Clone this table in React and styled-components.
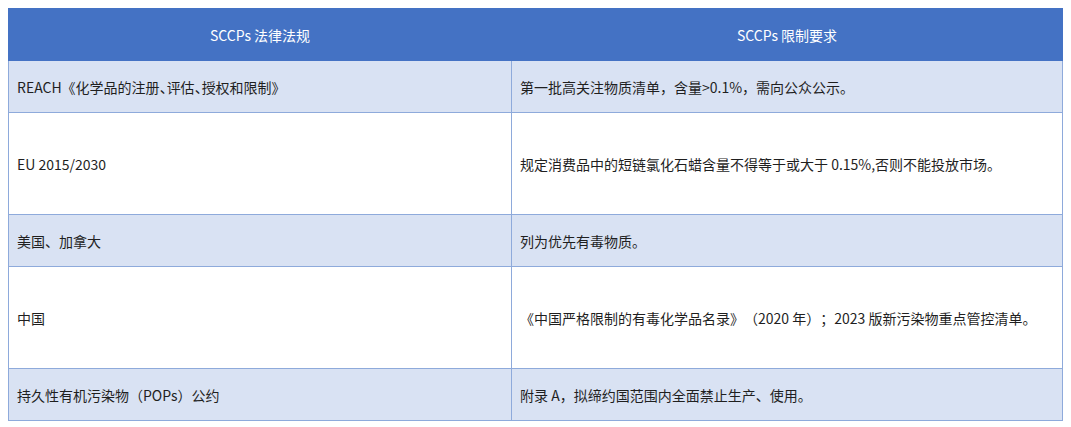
import React from "react";
import styled, { createGlobalStyle } from "styled-components";

const Global = createGlobalStyle`
  body {
    margin: 8px;
    background: #ffffff;
    font-family: "Noto Sans CJK SC", "Noto Sans", sans-serif;
    text-spacing-trim: space-all;
  }
`;

const Table = styled.table`
  width: 1054px;
  border-collapse: collapse;
  table-layout: fixed;
  font-size: 14px;
  color: #1f1f1f;
`;

const HeadCell = styled.th`
  height: 52px;
  padding: 0 8px;
  background: #4472c4;
  color: #ffffff;
  font-weight: normal;
  text-align: center;
  border: 1px solid #4472c4;
  box-sizing: border-box;
`;

const Cell = styled.td`
  height: ${(p) => (p.$tall ? 101 : 51)}px;
  padding: 0 8px;
  background: ${(p) => (p.$shaded ? "#d9e2f3" : "#ffffff")};
  border: 1px solid #8eaadb;
  vertical-align: middle;
  text-align: left;
  white-space: nowrap;
`;

const Half = styled.span`
  font-feature-settings: "halt";
`;

const rows = [
  {
    law: (
      <>
        REACH《化学品的注册<Half>、</Half>评估<Half>、</Half>授权和限制》
      </>
    ),
    req: "第一批高关注物质清单，含量>0.1%，需向公众公示。",
    shaded: true,
  },
  {
    law: "EU 2015/2030",
    req: "规定消费品中的短链氯化石蜡含量不得等于或大于 0.15%,否则不能投放市场。",
    tall: true,
  },
  { law: "美国、加拿大", req: "列为优先有毒物质。", shaded: true },
  {
    law: "中国",
    req: "《中国严格限制的有毒化学品名录》（2020 年）；2023 版新污染物重点管控清单。",
    tall: true,
  },
  {
    law: "持久性有机污染物（POPs）公约",
    req: "附录 A，拟缔约国范围内全面禁止生产、使用。",
    shaded: true,
  },
];

export default function App() {
  return (
    <>
      <Global />
      <Table>
        <colgroup>
          <col style={{ width: 503 }} />
          <col style={{ width: 551 }} />
        </colgroup>
        <thead>
          <tr>
            <HeadCell>SCCPs 法律法规</HeadCell>
            <HeadCell>SCCPs 限制要求</HeadCell>
          </tr>
        </thead>
        <tbody>
          {rows.map((r, i) => (
            <tr key={i}>
              <Cell $shaded={r.shaded} $tall={r.tall}>
                {r.law}
              </Cell>
              <Cell $shaded={r.shaded} $tall={r.tall}>
                {r.req}
              </Cell>
            </tr>
          ))}
        </tbody>
      </Table>
    </>
  );
}
